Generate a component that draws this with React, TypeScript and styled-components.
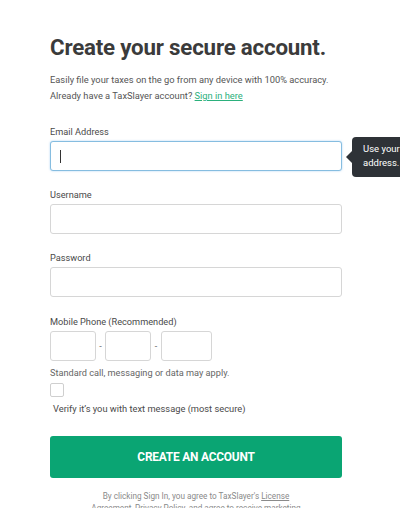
import React from "react";
import styled, { createGlobalStyle } from "styled-components";

const Global = createGlobalStyle`
  html, body { margin: 0; padding: 0; background: #fff; }
  body { font-family: Roboto, "Liberation Sans", Arial, sans-serif; color: #555; overflow: hidden; }
  * { box-sizing: border-box; }
`;

const Page = styled.div`
  width: 400px;
  height: 508px;
  overflow: hidden;
  padding: 33px 0 0 50px;
`;

const Form = styled.div`
  width: 292px;
  display: flex;
  flex-direction: column;
`;

const Title = styled.h1`
  margin: 0;
  font-size: 22.3px;
  font-weight: 700;
  color: #3b3b3b;
  letter-spacing: -0.2px;
  line-height: 28px;
  white-space: nowrap;
`;

const Intro = styled.p`
  margin: 11px 0 0;
  font-size: 9.3px;
  line-height: 16px;
  color: #555;
  white-space: nowrap;
`;

const Link = styled.a`
  color: #2bb07c;
  text-decoration: underline;
`;

const Field = styled.div<{ $top: number }>`
  position: relative;
  display: flex;
  flex-direction: column;
  margin-top: ${(p) => p.$top}px;
`;

const Label = styled.label`
  font-size: 9.2px;
  line-height: 12px;
  color: #4a4a4a;
  margin-bottom: 3px;
`;

const Input = styled.div<{ $focus?: boolean }>`
  height: 30px;
  border-radius: 3px;
  border: 1px solid ${(p) => (p.$focus ? "#86bde0" : "#d6d6d6")};
  box-shadow: ${(p) => (p.$focus ? "0 0 2px rgba(102,175,233,0.6)" : "none")};
  background: #fff;
  display: flex;
  align-items: center;
  padding-left: 9px;
`;

const Caret = styled.span`
  width: 1px;
  height: 13px;
  background: #333;
`;

const Tooltip = styled.div`
  position: absolute;
  left: 302px;
  top: 11px;
  width: 70px;
  height: 40px;
  background: #2e3237;
  border-radius: 4px;
  color: #fff;
  font-size: 9.5px;
  font-weight: 400;
  line-height: 14px;
  padding: 5px 0 0 11px;
  &::before {
    content: "";
    position: absolute;
    left: -6px;
    top: 14px;
    border-style: solid;
    border-width: 6px 6px 6px 0;
    border-color: transparent #2e3237 transparent transparent;
  }
`;

const PhoneRow = styled.div`
  display: flex;
  align-items: center;
`;

const PhoneBox = styled.div<{ $w: number }>`
  width: ${(p) => p.$w}px;
  height: 30px;
  border: 1px solid #d6d6d6;
  border-radius: 3px;
`;

const Dash = styled.span<{ $w: number }>`
  width: ${(p) => p.$w}px;
  text-align: center;
  font-size: 9px;
  color: #666;
`;

const Note = styled.div`
  margin-top: 6px;
  font-size: 9.2px;
  line-height: 12px;
  color: #666;
  white-space: nowrap;
`;

const Check = styled.div`
  margin-top: 4px;
  width: 14px;
  height: 14px;
  border: 1px solid #cfcfcf;
  border-radius: 2px;
`;

const CheckText = styled.div`
  margin: 6px 0 0 3px;
  font-size: 9.3px;
  line-height: 12px;
  color: #4a4a4a;
  white-space: nowrap;
`;

const Button = styled.button`
  margin-top: 21px;
  height: 42px;
  width: 292px;
  border: none;
  border-radius: 3px;
  background: #0aa573;
  color: #fff;
  font-family: Roboto, "Liberation Sans", Arial, sans-serif;
  font-weight: 700;
  font-size: 11.9px;
  letter-spacing: -0.2px;
`;

const Legal = styled.p`
  margin: 12px auto 0;
  width: 224px;
  font-size: 8.2px;
  line-height: 12px;
  color: #8a8a8a;
  text-align: center;
`;

const LegalLink = styled.span`
  text-decoration: underline;
`;

export default function App() {
  return (
    <>
      <Global />
      <Page>
        <Form>
          <Title>Create your secure account.</Title>
          <Intro>
            Easily file your taxes on the go from any device with 100% accuracy.
            <br />
            Already have a TaxSlayer account? <Link href="#">Sign in here</Link>
          </Intro>
          <Field $top={22}>
            <Label>Email Address</Label>
            <Input $focus>
              <Caret />
            </Input>
            <Tooltip>
              Use your
              <br />
              address.
            </Tooltip>
          </Field>
          <Field $top={18}>
            <Label>Username</Label>
            <Input />
          </Field>
          <Field $top={18}>
            <Label>Password</Label>
            <Input />
          </Field>
          <Field $top={19}>
            <Label>Mobile Phone (Recommended)</Label>
            <PhoneRow>
              <PhoneBox $w={46} />
              <Dash $w={9}>-</Dash>
              <PhoneBox $w={46} />
              <Dash $w={10}>-</Dash>
              <PhoneBox $w={51} />
            </PhoneRow>
          </Field>
          <Note>Standard call, messaging or data may apply.</Note>
          <Check />
          <CheckText>Verify it’s you with text message (most secure)</CheckText>
          <Button>CREATE AN ACCOUNT</Button>
          <Legal>
            By clicking Sign In, you agree to TaxSlayer's <LegalLink>License</LegalLink>{" "}
            <LegalLink>Agreement</LegalLink>, <LegalLink>Privacy Policy</LegalLink>, and agree to receive marketing
            communications.
          </Legal>
        </Form>
      </Page>
    </>
  );
}
